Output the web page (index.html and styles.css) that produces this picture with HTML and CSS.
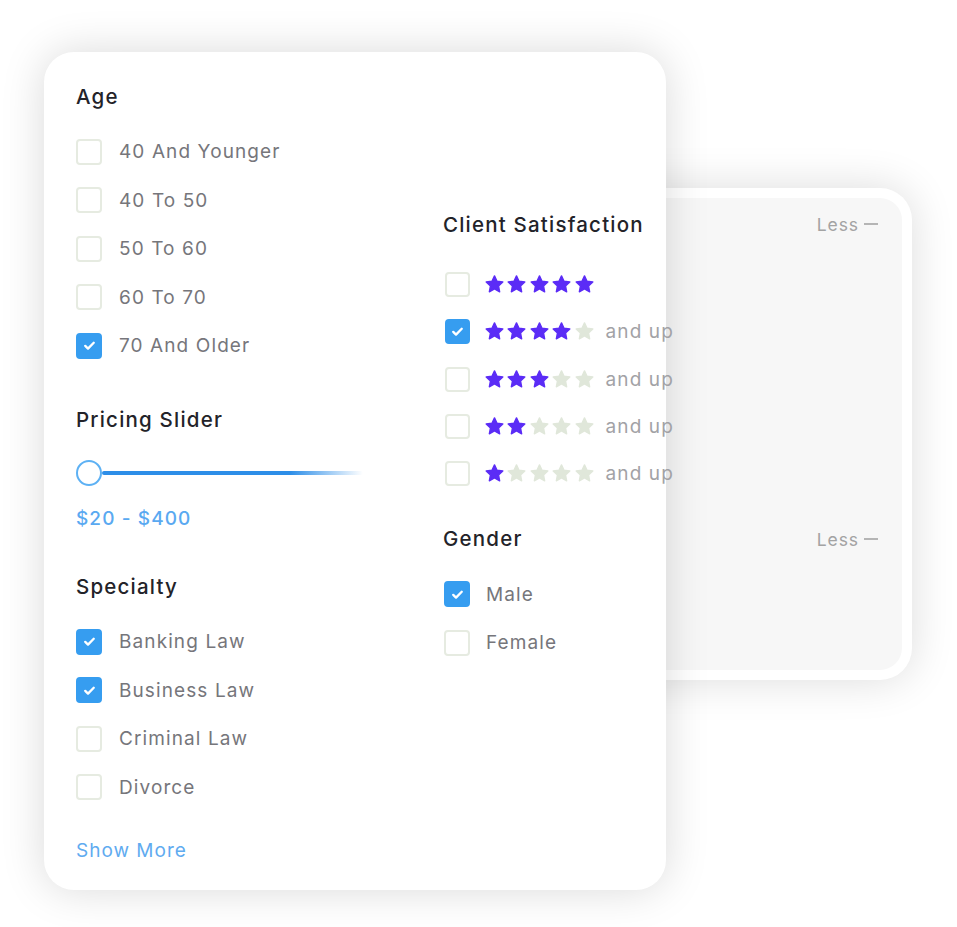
FILE: index.html
```html
<!DOCTYPE html>
<html lang="en">
<head>
    <meta charset="UTF-8">
    <meta name="viewport" content="width=device-width, initial-scale=1.0">
    <title>Lawyer Filters</title>
    <link rel="stylesheet" href="styles.css">
</head>
<body>
    <svg width="0" height="0" class="defs">
        <symbol id="star" viewBox="0 0 24 24">
            <path d="M12 2.2l2.9 6.1 6.6.8-4.9 4.6 1.3 6.6L12 17.1l-5.9 3.2 1.3-6.6-4.9-4.6 6.6-.8z" stroke-linejoin="round" stroke-width="1.6"/>
        </symbol>
        <symbol id="tick" viewBox="0 0 16 16">
            <path d="M4 8.4l2.6 2.5L12 5.4" fill="none" stroke="#fff" stroke-width="2.2" stroke-linecap="round" stroke-linejoin="round"/>
        </symbol>
    </svg>

    <div class="stage">
        <div class="back-card">
            <div class="back-inner">
                <div class="less">Less <span class="dash"></span></div>
                <div class="less second">Less <span class="dash"></span></div>
            </div>
        </div>

        <div class="card">
            <div class="col left">
                <h3>Age</h3>
                <ul class="list">
                    <li><span class="box"></span>40 And Younger</li>
                    <li><span class="box"></span>40 To 50</li>
                    <li><span class="box"></span>50 To 60</li>
                    <li><span class="box"></span>60 To 70</li>
                    <li><span class="box on"><svg><use href="#tick"/></svg></span>70 And Older</li>
                </ul>

                <h3 class="pricing">Pricing Slider</h3>
                <div class="slider">
                    <span class="thumb"></span>
                    <span class="track"></span>
                </div>
                <div class="price">$20 - $400</div>

                <h3 class="specialty">Specialty</h3>
                <ul class="list">
                    <li><span class="box on"><svg><use href="#tick"/></svg></span>Banking Law</li>
                    <li><span class="box on"><svg><use href="#tick"/></svg></span>Business Law</li>
                    <li><span class="box"></span>Criminal Law</li>
                    <li><span class="box"></span>Divorce</li>
                </ul>
                <a class="more" href="#">Show More</a>
            </div>

            <div class="col right">
                <h3>Client Satisfaction</h3>
                <ul class="list stars-list">
                    <li><span class="box"></span><span class="stars" data-n="5"></span></li>
                    <li><span class="box on"><svg><use href="#tick"/></svg></span><span class="stars" data-n="4"></span><span class="up">and up</span></li>
                    <li><span class="box"></span><span class="stars" data-n="3"></span><span class="up">and up</span></li>
                    <li><span class="box"></span><span class="stars" data-n="2"></span><span class="up">and up</span></li>
                    <li><span class="box"></span><span class="stars" data-n="1"></span><span class="up">and up</span></li>
                </ul>

                <h3 class="gender">Gender</h3>
                <ul class="list gender-list">
                    <li><span class="box on"><svg><use href="#tick"/></svg></span>Male</li>
                    <li><span class="box"></span>Female</li>
                </ul>
            </div>
        </div>
    </div>

    <script>
        // fill the star rows
        document.querySelectorAll(".stars").forEach((row) => {
            const n = Number(row.dataset.n);
            for (let i = 0; i < 5; i++) {
                const cls = i < n ? "star full" : "star empty";
                row.insertAdjacentHTML("beforeend", `<svg class="${cls}"><use href="#star"/></svg>`);
            }
        });
    </script>
</body>
</html>
```

FILE: styles.css
```css
body {
    margin: 0;
    background: #fff;
    font-family: Inter, "Open Sans", sans-serif;
    overflow: hidden;
}

.defs {
    position: absolute;
}

.stage {
    position: relative;
    width: 957px;
    height: 927px;
    padding: 52px 0 0 44px;
    box-sizing: border-box;
}

/* card sitting behind */
.back-card {
    position: absolute;
    top: 188px;
    left: 420px;
    width: 492px;
    height: 492px;
    box-sizing: border-box;
    padding: 10px;
    background: #fff;
    border-radius: 32px;
    box-shadow: 0 0 44px rgba(0, 0, 0, 0.14);
}

.back-inner {
    height: 100%;
    background: #f7f7f7;
    border-radius: 22px;
    padding: 13px 24px 0 0;
    box-sizing: border-box;
    display: flex;
    flex-direction: column;
    align-items: flex-end;
}

.less {
    display: flex;
    align-items: center;
    gap: 5px;
    height: 26px;
    font-size: 17.5px;
    letter-spacing: 0.9px;
    color: #a3a3a3;
}

.less.second {
    margin-top: 289px;
}

.dash {
    width: 14px;
    height: 2px;
    background: #b5b5b5;
}

/* front card */
.card {
    position: relative;
    z-index: 1;
    width: 622px;
    height: 838px;
    box-sizing: border-box;
    padding: 31px 0 0 32px;
    background: #fff;
    border-radius: 30px;
    box-shadow: 0 0 44px rgba(0, 0, 0, 0.15);
    display: grid;
    grid-template-columns: 367px 1fr;
}

.col.right {
    margin-top: 128px;
}

h3 {
    margin: 0;
    font-size: 20.5px;
    line-height: 28px;
    font-weight: 500;
    letter-spacing: 1.2px;
    color: #232329;
    white-space: nowrap;
}

.list {
    list-style: none;
    margin: 16.5px 0 0;
    padding: 0;
}

.list li {
    height: 48.5px;
    display: flex;
    align-items: center;
    font-size: 19px;
    letter-spacing: 1.1px;
    color: #76767b;
    white-space: nowrap;
}

.box {
    width: 26px;
    height: 26px;
    box-sizing: border-box;
    border: 2px solid #e6ebe1;
    border-radius: 4px;
    margin-right: 17px;
    flex-shrink: 0;
    display: flex;
    align-items: center;
    justify-content: center;
}

.box.on {
    background: #369df0;
    border-color: #369df0;
}

.box svg {
    width: 17px;
    height: 17px;
}

.pricing {
    margin-top: 36px;
}

.slider {
    position: relative;
    height: 26px;
    margin-top: 26px;
    display: flex;
    align-items: center;
}

.thumb {
    width: 26px;
    height: 26px;
    box-sizing: border-box;
    border: 2.5px solid #5db1f4;
    border-radius: 50%;
    background: #fff;
    flex-shrink: 0;
}

.track {
    width: 261px;
    height: 4px;
    border-radius: 2px;
    background: linear-gradient(to right, #2d8ee8 0%, #2d8ee8 72%, rgba(45, 142, 232, 0) 100%);
}

.price {
    margin-top: 21px;
    line-height: 24px;
    font-size: 19px;
    font-weight: 500;
    letter-spacing: 1.1px;
    color: #5aa9f1;
}

.specialty {
    margin-top: 42px;
}

.more {
    display: block;
    margin-top: 27px;
    line-height: 24px;
    font-size: 19px;
    letter-spacing: 1px;
    color: #5fabf0;
    text-decoration: none;
}

/* right column */
.stars-list {
    margin-top: 22px;
}

.stars-list li {
    height: 47.3px;
}

.stars-list .box {
    width: 25px;
    height: 25px;
    margin-left: 2px;
    margin-right: 14px;
}

.stars {
    display: flex;
    gap: 1.4px;
    flex-shrink: 0;
}

.star {
    width: 21px;
    height: 21px;
}

.star.full {
    fill: #5b2cf6;
    stroke: #5b2cf6;
}

.star.empty {
    fill: #e0e7da;
    stroke: #e0e7da;
}

.up {
    margin-left: 11px;
    color: #a2a2a6;
    flex-shrink: 0;
}

.gender {
    margin-top: 28px;
}

.gender-list li .box {
    margin-left: 1px;
    margin-right: 16px;
}
```
